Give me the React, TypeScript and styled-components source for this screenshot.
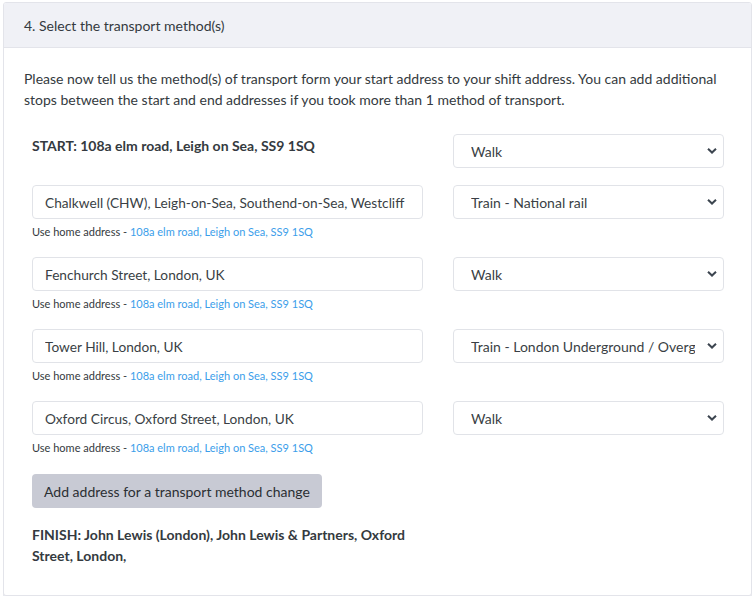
import React from "react";
import styled, { createGlobalStyle } from "styled-components";

const Global = createGlobalStyle`
  html, body { margin: 0; padding: 0; background: #fff; }
  body { font-family: Lato, "Open Sans", Arial, sans-serif; color: #343a40; }
  * { box-sizing: border-box; }
`;

const Page = styled.div`
  padding: 2px 3px 0 3px;
`;

const Card = styled.div`
  width: 749px;
  border: 1px solid #e3e4ea;
  border-radius: 3px;
  background: #fff;
  box-shadow: 0 2px 0 #e8e9ee;
  overflow: hidden;
`;

const CardHeader = styled.div`
  height: 45px;
  background: #f0f1f6;
  border-bottom: 1px solid #e3e4ea;
  display: flex;
  align-items: center;
  padding: 0 20px;
  font-size: 14px;
  color: #343a40;
`;

const CardBody = styled.div`
  padding: 20px 20px 29px 20px;
`;

const Intro = styled.p`
  margin: 0 0 24px 0;
  font-size: 14px;
  line-height: 21px;
`;

const Grid = styled.div`
  display: grid;
  grid-template-columns: 421px 301px;
  margin-left: -7px;
`;

const Col = styled.div`
  padding: 0 15px;
  display: flex;
  flex-direction: column;
`;

const Strong = styled.div`
  font-weight: 700;
  font-size: 14px;
  line-height: 21px;
`;

const Input = styled.input`
  width: 100%;
  height: 34px;
  border: 1px solid #e1e3e8;
  border-radius: 4px;
  padding: 0 12px;
  font-family: Lato, Arial, sans-serif;
  font-size: 13.7px;
  color: #3a3f45;
  background: #fff;
  outline: none;
`;

const Hint = styled.div`
  font-size: 11px;
  line-height: 14px;
  margin-top: 6px;
  color: #343a40;
`;

const Link = styled.a`
  color: #3b9eea;
  text-decoration: none;
`;

const SelectWrap = styled.div`
  position: relative;
  width: 100%;
  height: 34px;
  border: 1px solid #e1e3e8;
  border-radius: 4px;
  background: #fff;
  display: flex;
  align-items: center;
  padding: 0 28px 0 17px;
  font-size: 14px;
  color: #3a3f45;
`;

const SelectText = styled.span`
  flex: 1;
  min-width: 0;
  white-space: nowrap;
  overflow: hidden;
`;

const Chevron = styled.svg`
  position: absolute;
  right: 6px;
  top: 50%;
  transform: translateY(-50%);
`;

const Button = styled.button`
  height: 34px;
  padding: 0 12px;
  border: none;
  border-radius: 4px;
  background: #c8cad4;
  color: #2b2f33;
  font-family: Lato, Arial, sans-serif;
  font-size: 14px;
  cursor: pointer;
  align-self: flex-start;
`;

const Select = ({ value }: { value: string }) => (
  <SelectWrap>
    <SelectText>{value}</SelectText>
    <Chevron width="10" height="7" viewBox="0 0 10 7">
      <path d="M1 1.2 L5 5 L9 1.2" fill="none" stroke="#3d4650" strokeWidth="2" />
    </Chevron>
  </SelectWrap>
);

const Spacer = styled.div<{ $h: number }>`
  height: ${(p) => p.$h}px;
`;

const addr = "108a elm road, Leigh on Sea, SS9 1SQ";

const stops = [
  { place: "Chalkwell (CHW), Leigh-on-Sea, Southend-on-Sea, Westcliff", method: "Train - National rail" },
  { place: "Fenchurch Street, London, UK", method: "Walk" },
  { place: "Tower Hill, London, UK", method: "Train - London Underground / Overground" },
  { place: "Oxford Circus, Oxford Street, London, UK", method: "Walk" },
];

export default function App() {
  return (
    <>
      <Global />
      <Page>
        <Card>
          <CardHeader>4. Select the transport method(s)</CardHeader>
          <CardBody>
            <Intro>
              Please now tell us the method(s) of transport form your start address to your shift address. You can add additional
              stops between the start and end addresses if you took more than 1 method of transport.
            </Intro>
            <Grid>
              <Col>
                <Spacer $h={1} />
                <Strong>START: {addr}</Strong>
              </Col>
              <Col>
                <Select value="Walk" />
                <Spacer $h={17} />
              </Col>
              {stops.map((s, i) => (
                <React.Fragment key={i}>
                  <Col>
                    <Input defaultValue={s.place} readOnly />
                    <Hint>
                      Use home address - <Link>{addr}</Link>
                    </Hint>
                    <Spacer $h={18} />
                  </Col>
                  <Col>
                    <Select value={s.method} />
                  </Col>
                </React.Fragment>
              ))}
              <Col>
                <Spacer $h={1} />
                <Button>Add address for a transport method change</Button>
                <Spacer $h={16} />
                <Strong>FINISH: John Lewis (London), John Lewis &amp; Partners, Oxford Street, London,</Strong>
              </Col>
              <Col />
            </Grid>
          </CardBody>
        </Card>
      </Page>
    </>
  );
}
